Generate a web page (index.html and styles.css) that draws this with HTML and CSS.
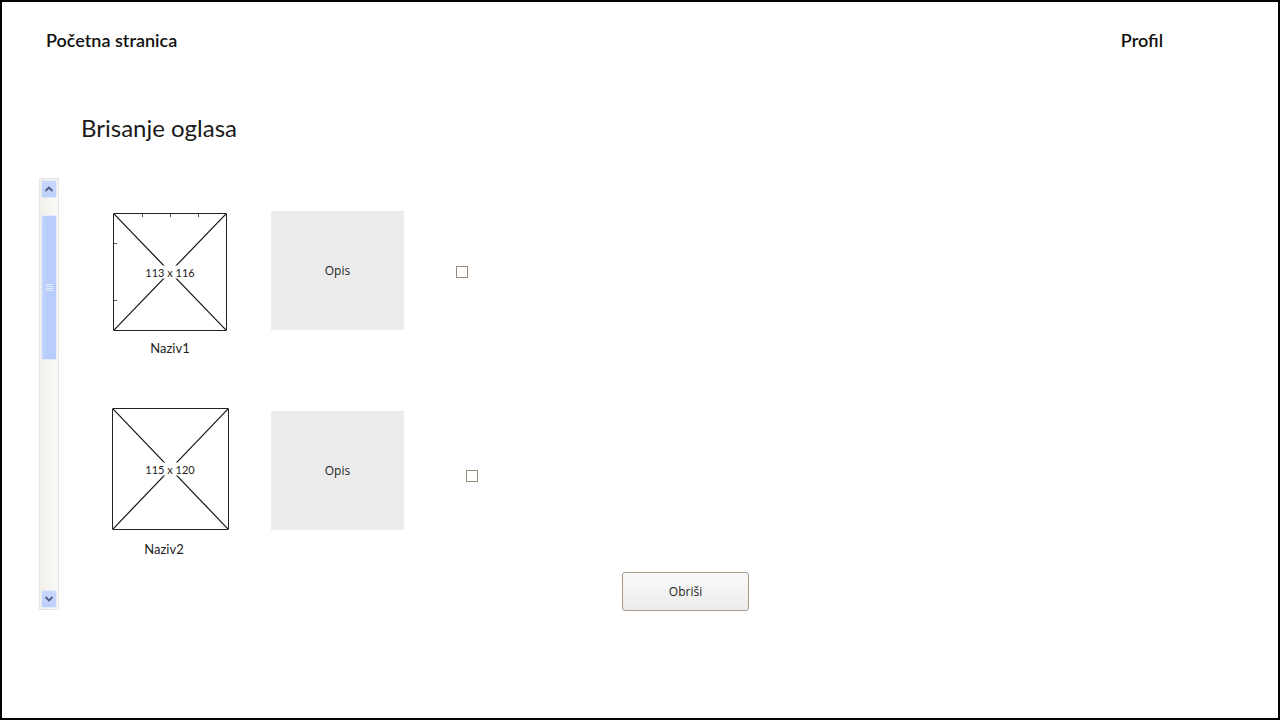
FILE: index.html
```html
<!DOCTYPE html>
<html lang="hr">
<head>
<meta charset="utf-8">
<title>Brisanje oglasa</title>
<link rel="stylesheet" href="styles.css">
</head>
<body>
<div class="frame">
  <header class="topbar">
    <a class="nav-link">Početna stranica</a>
    <a class="nav-link">Profil</a>
  </header>
  <h1 class="title">Brisanje oglasa</h1>
  <main class="main">
    <div class="scrollbar">
      <div class="sb-btn">
        <svg width="10" height="6" viewBox="0 0 10 6"><path d="M1.5 5 L5 1.5 L8.5 5" fill="none" stroke="#4a5d84" stroke-width="1.8"/></svg>
      </div>
      <div class="sb-thumb"><span class="grip"></span></div>
      <div class="sb-fill"></div>
      <div class="sb-btn">
        <svg width="10" height="6" viewBox="0 0 10 6"><path d="M1.5 1 L5 4.5 L8.5 1" fill="none" stroke="#4a5d84" stroke-width="1.8"/></svg>
      </div>
    </div>
    <div class="list">
      <div class="row row-a">
        <div class="thumb-col">
          <div class="ph" style="width:114px;height:118px">
            <svg class="ph-x" viewBox="0 0 100 100" preserveAspectRatio="none"><line x1="0" y1="0" x2="100" y2="100"/><line x1="100" y1="0" x2="0" y2="100"/></svg>
            <span class="tick t1"></span><span class="tick t2"></span><span class="tick t3"></span>
            <span class="tick l1"></span><span class="tick l2"></span>
            <span class="ph-label">113 x 116</span>
          </div>
          <div class="caption">Naziv1</div>
        </div>
        <div class="opis">Opis</div>
        <span class="check"></span>
      </div>
      <div class="row row-b">
        <div class="thumb-col">
          <div class="ph" style="width:117px;height:122px">
            <svg class="ph-x" viewBox="0 0 100 100" preserveAspectRatio="none"><line x1="0" y1="0" x2="100" y2="100"/><line x1="100" y1="0" x2="0" y2="100"/></svg>
            <span class="ph-label">115 x 120</span>
          </div>
          <div class="caption">Naziv2</div>
        </div>
        <div class="opis">Opis</div>
        <span class="check"></span>
      </div>
      <div class="actions">
        <button class="btn">Obriši</button>
      </div>
    </div>
  </main>
</div>
</body>
</html>
```
FILE: styles.css
```css
* { box-sizing: border-box; }
html, body { margin: 0; padding: 0; background: #fff; }
body { font-family: Lato, "Noto Sans", sans-serif; color: #111; }

.frame {
  width: 1280px;
  height: 720px;
  border: 2px solid #000;
  overflow: hidden;
}

.topbar {
  display: flex;
  justify-content: space-between;
  padding: 26px 115px 0 44px;
  height: 51px;
}
.nav-link {
  font-size: 18px;
  line-height: 24px;
  font-weight: 600;
  color: #111;
}

.title {
  margin: 60px 0 0 79px;
  font-size: 24px;
  line-height: 30px;
  font-weight: 400;
  color: #1a1a1a;
  height: 65px;
}

.main {
  display: flex;
  align-items: flex-start;
  padding-left: 37px;
}

.scrollbar {
  width: 20px;
  height: 432px;
  border: 1px solid #e7e5de;
  background: linear-gradient(to right, #f1f0eb, #f9f9f6);
  display: flex;
  flex-direction: column;
  padding: 1px;
}
.sb-btn {
  height: 18px;
  border: 1px solid #e2e9fb;
  border-radius: 2px;
  background: linear-gradient(to bottom, #c9d8fd, #bccefb);
  display: flex;
  align-items: center;
  justify-content: center;
}
.sb-thumb {
  margin-top: 17px;
  height: 145px;
  border: 1px solid #e4ebfc;
  border-radius: 2px;
  background: linear-gradient(to right, #c4d5fd, #b6ccfb 40%, #b8cdfb);
  display: flex;
  align-items: center;
  justify-content: center;
}
.grip {
  width: 7px;
  height: 8px;
  background: repeating-linear-gradient(to bottom, #e6edfd 0 1px, transparent 1px 2px);
}
.sb-fill { flex: 1; }

.list {
  padding-top: 33px;
  padding-left: 52px;
}

.row {
  display: flex;
  align-items: flex-start;
}
.row-a { margin-bottom: 52px; }
.row-a .thumb-col { padding-top: 2px; }
.row-a .caption { margin-top: 9px; }
.row-a .check { margin: 55px 0 0 52px; }
.row-b .opis { margin-top: 3px; }
.row-b .caption { margin: 11px 12px 0 0; }
.row-b .check { margin: 62px 0 0 62px; }

.thumb-col {
  width: 118px;
  display: flex;
  flex-direction: column;
  align-items: center;
}
.ph {
  position: relative;
  border: 1.5px solid #222;
  border-radius: 1px;
  background: #fff;
}
.ph-x {
  position: absolute;
  inset: 0;
  width: 100%;
  height: 100%;
}
.ph-x line { stroke: #111; stroke-width: 1.2; vector-effect: non-scaling-stroke; }
.ph-label {
  position: absolute;
  left: 50%;
  top: 50%;
  transform: translate(-50%, -50%);
  background: #fff;
  font-size: 11px;
  line-height: 13px;
  padding: 0 1px;
  color: #222;
  white-space: nowrap;
}
.tick { position: absolute; background: #555; }
.tick.t1, .tick.t2, .tick.t3 { top: 0; width: 1px; height: 3px; }
.tick.t1 { left: 28px; }
.tick.t2 { left: 56px; }
.tick.t3 { left: 84px; }
.tick.l1, .tick.l2 { left: 0; width: 3px; height: 1px; }
.tick.l1 { top: 29px; }
.tick.l2 { top: 86px; }

.caption {
  font-size: 13px;
  line-height: 16px;
  color: #222;
}

.opis {
  margin-left: 42px;
  width: 133px;
  height: 119px;
  background: #ececec;
  display: flex;
  align-items: center;
  justify-content: center;
  font-family: "Open Sans", Lato, sans-serif;
  font-size: 12px;
  color: #222;
}

.check {
  width: 12px;
  height: 12px;
  border: 1px solid #978a7c;
  background: #fff;
}

.actions {
  padding-left: 511px;
  margin-top: 15px;
}
.btn {
  width: 127px;
  height: 39px;
  border: 1px solid #a8998a;
  border-radius: 3px;
  background: linear-gradient(to bottom, #fafafa, #ebebeb);
  font-family: "Open Sans", Lato, sans-serif;
  font-size: 12px;
  color: #222;
  padding: 0;
}
```
